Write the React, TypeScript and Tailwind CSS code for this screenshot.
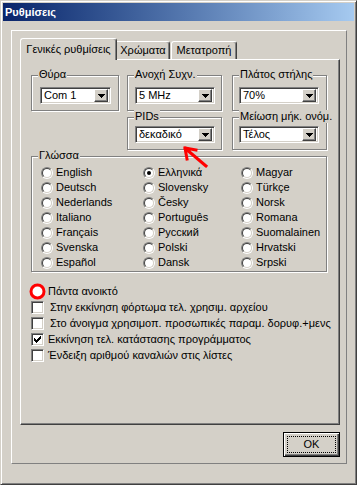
import React from 'react';

const raised = 'bg-[#d4d0c8] border border-t-white border-l-white border-r-[#404040] border-b-[#404040] shadow-[inset_-1px_-1px_0_#808080]';
const sunken = 'border border-t-[#808080] border-l-[#808080] border-r-white border-b-white shadow-[inset_1px_1px_0_#404040,inset_-1px_-1px_0_#d4d0c8]';

function Group({ label, className, children }: { label: string; className: string; children?: React.ReactNode }) {
  return (
    <div className={`relative border border-[#808080] shadow-[1px_1px_0_#fff,inset_1px_1px_0_#fff] ${className}`}>
      <span className="absolute left-[6px] top-[-8px] bg-[#d4d0c8] px-[1px] leading-[13px] whitespace-nowrap">{label}</span>
      {children}
    </div>
  );
}

function Combo({ value, w }: { value: string; w: string }) {
  return (
    <div className={`flex items-center h-[17px] bg-white ${sunken} ${w} p-[2px]`}>
      <span className="flex-1 pl-[1px] leading-[13px] whitespace-nowrap overflow-hidden">{value}</span>
      <span className={`flex items-center justify-center w-[14px] h-[13px] ${raised}`}>
        <svg width="7" height="4" viewBox="0 0 7 4" shapeRendering="crispEdges">
          <path d="M0 0h7v1H0zM1 1h5v1H1zM2 2h3v1H2zM3 3h1v1H3z" fill="#000" />
        </svg>
      </span>
    </div>
  );
}

function Radio({ label, checked }: { label: string; checked?: boolean }) {
  return (
    <div className="flex items-center h-[15px] gap-[3px]">
      <span className="flex w-[12px] h-[12px] rounded-full border border-[#808080] border-r-white border-b-white">
        <span className="flex flex-1 items-center justify-center rounded-full border border-[#404040] border-r-[#d4d0c8] border-b-[#d4d0c8] bg-white">
          {checked ? <span className="w-[4px] h-[4px] rounded-full bg-black" /> : null}
        </span>
      </span>
      <span className="leading-[13px] whitespace-nowrap">{label}</span>
    </div>
  );
}

function Check({ label, checked, gap }: { label: string; checked?: boolean; gap: string }) {
  return (
    <div className={`flex items-center h-[16px] ${gap}`}>
      <span className={`flex items-center justify-center w-[13px] h-[13px] bg-white ${sunken}`}>
        {checked ? (
          <svg width="7" height="7" viewBox="0 0 7 7" shapeRendering="crispEdges">
            <path d="M6 0h1v1H6zM5 1h2v1H5zM0 2h1v1H0zM4 2h3v1H4zM0 3h2v1H0zM3 3h3v1H3zM0 4h5v1H0zM1 5h3v1H1zM2 6h1v1H2z" fill="#000" />
          </svg>
        ) : null}
      </span>
      <span className="leading-[13px] whitespace-nowrap">{label}</span>
    </div>
  );
}

const COL1 = ['English', 'Deutsch', 'Nederlands', 'Italiano', 'Français', 'Svenska', 'Español'];
const COL2 = ['Ελληνικά', 'Slovensky', 'Česky', 'Português', 'Русский', 'Polski', 'Dansk'];
const COL3 = ['Magyar', 'Türkçe', 'Norsk', 'Romana', 'Suomalainen', 'Hrvatski', 'Srpski'];

export default function App() {
  return (
    <div className="relative w-[357px] h-[485px] bg-[#d4d0c8] border border-[#d4d0c8] border-r-[#404040] border-b-[#404040] shadow-[inset_1px_1px_0_#fff,inset_-1px_-1px_0_#808080] p-[2px] font-['Liberation_Sans',Arial,sans-serif] text-[11px] text-black overflow-hidden">
      {/* title bar */}
      <div className="flex items-center h-[18px] pl-[2px] bg-gradient-to-r from-[#0a246a] to-[#a6caf0] text-white font-bold">
        Ρυθμίσεις
      </div>

      {/* outer frame */}
      <div className="mt-[9px] ml-[8px] w-[336px] h-[434px] border border-t-white border-l-white border-r-[#808080] border-b-[#808080] pl-[8px] pt-[7px]">
        <div className="flex flex-col w-[320px]">
          {/* tabs */}
          <div className="flex items-end h-[21px]">
            <div className="relative z-10 -mb-px flex items-center justify-center w-[97px] h-[22px] bg-[#d4d0c8] border-l border-t border-white border-r border-r-[#404040] rounded-t-[3px] shadow-[inset_-1px_0_0_#808080]">
              Γενικές ρυθμίσεις
            </div>
            <div className="flex items-center justify-center w-[53px] h-[18px] bg-[#d4d0c8] border-t border-white border-r border-r-[#404040] rounded-tr-[3px] shadow-[inset_-1px_0_0_#808080]">
              Χρώματα
            </div>
            <div className="ml-[1px] flex items-center justify-center w-[66px] h-[18px] bg-[#d4d0c8] border-l border-t border-white border-r border-r-[#404040] rounded-t-[3px] shadow-[inset_-1px_0_0_#808080]">
              Μετατροπή
            </div>
          </div>

          {/* tab panel */}
          <div className={`h-[366px] ${raised} pl-[10px] pt-[15px]`}>
            <div className="flex gap-[8px]">
              <Group label="Θύρα" className="w-[88px] h-[36px] pl-[8px] pt-[11px]">
                <Combo value="Com 1" w="w-[71px]" />
              </Group>
              <Group label="Ανοχή Συχν." className="w-[95px] h-[36px] pl-[7px] pt-[11px]">
                <Combo value="5 MHz" w="w-[80px]" />
              </Group>
              <Group label="Πλάτος στήλης" className="ml-[2px] w-[95px] h-[36px] pl-[6px] pt-[11px]">
                <Combo value="70%" w="w-[80px]" />
              </Group>
            </div>
            <div className="flex gap-[10px] mt-[6px] ml-[96px]">
              <Group label="PIDs" className="w-[95px] h-[33px] pl-[7px] pt-[8px]">
                <Combo value="δεκαδικό" w="w-[80px]" />
              </Group>
              <Group label="Μείωση μήκ. ονόμ." className="w-[95px] h-[33px] pl-[6px] pt-[8px]">
                <Combo value="Τέλος" w="w-[80px]" />
              </Group>
            </div>
            <Group label="Γλώσσα" className="mt-[6px] w-[296px] h-[116px] pl-[9px] pt-[8px]">
              <div className="flex">
                <div className="flex flex-col w-[102px]">
                  {COL1.map((l) => <Radio key={l} label={l} />)}
                </div>
                <div className="flex flex-col w-[98px]">
                  {COL2.map((l, i) => <Radio key={l} label={l} checked={i === 0} />)}
                </div>
                <div className="flex flex-col">
                  {COL3.map((l) => <Radio key={l} label={l} />)}
                </div>
              </div>
            </Group>

            <div className="flex flex-col mt-[11px]">
              <div className="flex items-center h-[16px] gap-[2px] -ml-[2px]">
                <svg width="17" height="17" viewBox="0 0 17 17">
                  <circle cx="8.5" cy="8.5" r="6.5" fill="#fff" stroke="#ff0000" strokeWidth="3" />
                </svg>
                <span className="leading-[13px]">Πάντα ανοικτό</span>
              </div>
              <Check label="Στην εκκίνηση φόρτωμα τελ. χρησιμ. αρχείου" gap="gap-[6px]" />
              <Check label="Στο άνοιγμα χρησιμοπ. προσωπικές παραμ. δορυφ.+μενς" gap="gap-[6px]" />
              <Check label="Εκκίνηση τελ. κατάστασης προγράμματος" checked gap="gap-[4px]" />
              <Check label="Ένδειξη αριθμού καναλιών στις λίστες" gap="gap-[4px]" />
            </div>
          </div>

          {/* OK button */}
          <button className="self-end mt-[7px] w-[57px] h-[25px] border border-black bg-[#d4d0c8] shadow-[inset_1px_1px_0_#fff,inset_-1px_-1px_0_#404040,inset_-2px_-2px_0_#808080] p-[3px] flex">
            <span className="flex flex-1 items-center justify-center border border-dotted border-black">OK</span>
          </button>
        </div>
      </div>

      {/* red annotation arrow */}
      <svg className="absolute left-[180px] top-[143px]" width="30" height="26" viewBox="0 0 30 26">
        <path d="M25 22L5 5M4 4L15 6M4 4L6 15" stroke="#ff0000" strokeWidth="3" fill="none" strokeLinecap="square" />
      </svg>
    </div>
  );
}
